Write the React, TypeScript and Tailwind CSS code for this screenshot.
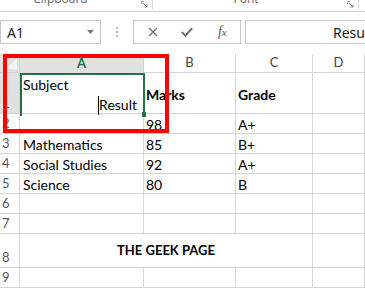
import React from "react";

function Cell({
  children,
  className = "",
}: {
  children?: React.ReactNode;
  className?: string;
}) {
  return (
    <div
      className={`border-r border-b border-[#d4d4d4] overflow-visible whitespace-nowrap flex ${className}`}
    >
      {children}
    </div>
  );
}

function RowHead({ n, sel = false }: { n: number; sel?: boolean }) {
  return (
    <div
      className={`border-r border-b border-[#d4d4d4] flex items-end pl-[2px] pb-[3px] text-[13px] leading-[14px] ${
        sel ? "bg-[#e1e1e1] text-[#217346]" : "text-[#555]"
      }`}
    >
      {n}
    </div>
  );
}

function Launcher() {
  return (
    <svg width="7" height="7" viewBox="0 0 7 7" className="block">
      <path d="M0.5 3 V0.5 H3" stroke="#999" strokeWidth="1" fill="none" />
      <path d="M2 2 L6 6 M6 3.5 V6 H3.5" stroke="#777" strokeWidth="1" fill="none" />
    </svg>
  );
}

export default function App() {
  const rows: { n: number; a?: string; b?: string; c?: string }[] = [
    { n: 2, b: "98", c: "A+" },
    { n: 3, a: "Mathematics", b: "85", c: "B+" },
    { n: 4, a: "Social Studies", b: "92", c: "A+" },
    { n: 5, a: "Science", b: "80", c: "B" },
    { n: 6 },
    { n: 7 },
  ];
  return (
    <div className="relative w-[365px] h-[288px] bg-white overflow-hidden font-['Lato',sans-serif] text-black">
      {/* Ribbon group labels */}
      <div className="h-[12px] border-b border-[#d5d5d5] flex text-[12px] text-[#666] font-['Open_Sans',sans-serif]">
        <div className="w-[153px] flex items-start relative">
          <div className="flex-1 text-center leading-[12px] mt-[-7px] pr-[20px]">Clipboard</div>
          <div className="mt-[1px] mr-[4px]">
            <Launcher />
          </div>
          <div className="w-px h-[9px] bg-[#d5d5d5]" />
        </div>
        <div className="w-[206px] flex items-start">
          <div className="flex-1 text-center leading-[12px] mt-[-7px] pr-[8px]">Font</div>
          <div className="mt-[1px] mr-[4px]">
            <Launcher />
          </div>
          <div className="w-px h-[9px] bg-[#d5d5d5]" />
        </div>
      </div>

      {/* Formula bar */}
      <div className="mt-[8px] h-[24px] flex font-['Noto_Sans',sans-serif]">
        <div className="w-[101px] border border-[#c6c6c6] flex items-center justify-between pl-[6px] pr-[6px]">
          <span className="text-[14px] text-[#222]">A1</span>
          <svg width="7" height="4" viewBox="0 0 7 4">
            <path d="M0 0 H7 L3.5 4 Z" fill="#777" />
          </svg>
        </div>
        <div className="w-[32px] flex flex-col items-center justify-center gap-[2px]">
          <div className="w-[2px] h-[2px] bg-[#b5b5b5]" />
          <div className="w-[2px] h-[2px] bg-[#b5b5b5]" />
          <div className="w-[2px] h-[2px] bg-[#b5b5b5]" />
        </div>
        <div className="w-[108px] border border-[#c6c6c6] flex items-center">
          <div className="w-[36px] flex justify-center pl-[2px]">
            <svg width="10" height="10" viewBox="0 0 10 10">
              <path d="M1 1 L9 9 M9 1 L1 9" stroke="#6f6f6f" strokeWidth="1.4" />
            </svg>
          </div>
          <div className="w-[36px] flex justify-center">
            <svg width="12" height="10" viewBox="0 0 12 10">
              <path d="M0.8 5 L4.3 8.6 L11.2 1.2" stroke="#6f6f6f" strokeWidth="2" fill="none" />
            </svg>
          </div>
          <div className="w-[36px] flex justify-center">
            <span className="font-['Liberation_Serif',serif] italic text-[14px] leading-[14px] text-[#555]">
              f<span className="text-[11px]">x</span>
            </span>
          </div>
        </div>
        <div className="ml-[4px] flex-1 border border-[#c6c6c6] border-r-0 flex items-center overflow-hidden">
          <span className="pl-[87px] text-[14px] text-[#222] whitespace-nowrap">Result</span>
        </div>
      </div>

      {/* Grid */}
      <div className="mt-[10px] grid grid-cols-[20px_124px_92px_77px_52px] grid-rows-[19px_41px_20px_20px_20px_20px_20px_20px_34px_20px]">
        {/* header */}
        <div className="bg-[#e1e1e1] border-r border-b border-[#d4d4d4] relative">
          <svg width="11" height="11" viewBox="0 0 11 11" className="absolute right-[2px] bottom-[3px]">
            <path d="M11 0 V11 H0 Z" fill="#f3f3f3" />
          </svg>
        </div>
        <div className="bg-[#e1e1e1] border-r border-[#d4d4d4] flex items-center justify-center text-[13px] text-[#217346] font-bold">
          A
        </div>
        <div className="border-r border-b border-[#d4d4d4] flex items-center justify-center text-[13px] text-[#444]">
          B
        </div>
        <div className="border-r border-b border-[#d4d4d4] flex items-center justify-center text-[13px] text-[#444]">
          C
        </div>
        <div className="border-r border-b border-[#d4d4d4] flex items-center justify-center text-[13px] text-[#444]">
          D
        </div>

        {/* row 1 */}
        <RowHead n={1} sel />
        <Cell className="flex-col text-[14px] leading-[20px] pl-[3px] pr-[6px] justify-end">
          <span className="translate-y-[2px]">Subject</span>
          <span className="self-end translate-y-[2px]">Result</span>
        </Cell>
        <Cell className="items-center pl-[2px] text-[14px] font-bold pt-[3px]">Marks</Cell>
        <Cell className="items-center pl-[2px] text-[14px] font-bold pt-[3px]">Grade</Cell>
        <Cell />

        {rows.map((r) => (
          <React.Fragment key={r.n}>
            <RowHead n={r.n} />
            <Cell className="items-end pl-[3px] text-[14px] leading-[19px]">
              <span className="translate-y-[1px]">{r.a}</span>
            </Cell>
            <Cell className="items-end pl-[2px] text-[14px] leading-[19px]">
              <span className="translate-y-[1px]">{r.b}</span>
            </Cell>
            <Cell className="items-end pl-[2px] text-[14px] leading-[19px]">
              <span className="translate-y-[1px]">{r.c}</span>
            </Cell>
            <Cell />
          </React.Fragment>
        ))}

        {/* row 8 merged */}
        <RowHead n={8} />
        <Cell className="col-span-3 items-center justify-center text-[13px] font-bold pt-[1px]">
          THE GEEK PAGE
        </Cell>
        <Cell />

        <RowHead n={9} />
        <Cell />
        <Cell />
        <Cell />
        <Cell />
      </div>

      {/* selection border (edit mode) */}
      <div className="absolute left-[20px] top-[73px] w-[125px] h-[43px] border-t-2 border-l-2 border-r-2 border-[#217346]" />
      <div className="absolute left-[142px] top-[112px] w-[4px] h-[5px] bg-[#217346]" />

      {/* text cursor */}
      <div className="absolute left-[98px] top-[96px] w-px h-[19px] bg-black" />

      {/* red annotation box */}
      <div className="absolute left-[3px] top-[54px] w-[166px] h-[79px] border-4 border-[#ff0000]" />
    </div>
  );
}
